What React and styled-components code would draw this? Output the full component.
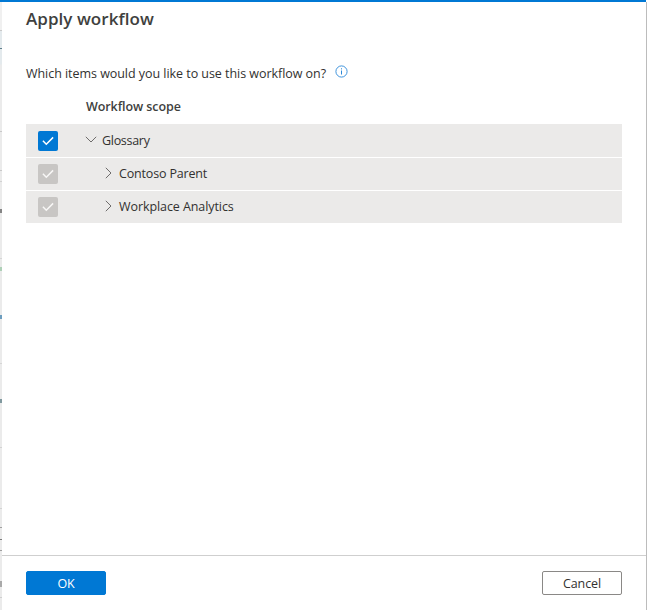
import React from 'react';
import styled, { createGlobalStyle } from 'styled-components';

const GlobalStyle = createGlobalStyle`
  *, *::before, *::after { box-sizing: border-box; }
  body {
    margin: 0;
    background: #fff;
    font-family: "Open Sans", "Noto Sans", sans-serif;
    font-size: 12.5px;
    color: #323130;
  }
`;

const Screen = styled.div`
  display: flex;
  width: 648px;
  height: 610px;
  overflow: hidden;
  background: linear-gradient(#0078d4, #0078d4) 0 0 / 646px 2px no-repeat, #fff;
`;

const PageEdge = styled.div`
  flex: none;
  display: flex;
  flex-direction: column;
  width: 2px;
  margin-top: 2px;
  background: linear-gradient(#f0f0f0 28px, #e4eaed 29px, #e4eaed 62px, #ebebeb 63px);
`;

const EdgeMark = styled.i`
  flex: none;
  height: ${(p) => p.$size}px;
  margin-top: ${(p) => p.$gap}px;
  background: ${(p) => p.$color};
`;

const Panel = styled.section`
  flex: none;
  display: flex;
  flex-direction: column;
  width: 645px;
  margin-top: 2px;
  background: #fff;
  border-right: 1px solid #bcbcbc;
`;

const Content = styled.main`
  flex: 1;
  padding: 0 24px;
`;

const Title = styled.h1`
  margin: 4px 0 0;
  font-size: 17px;
  line-height: 26px;
  font-weight: 600;
  letter-spacing: 0.05px;
  color: #403f3e;
  white-space: nowrap;
`;

const Question = styled.div`
  display: flex;
  height: 20px;
  margin-top: 32px;
  line-height: 20px;
  letter-spacing: -0.045px;
  white-space: nowrap;
  svg { margin: 1px 0 0 9px; }
`;

const ScopeHeading = styled.h2`
  margin: 13px 0 7px 60px;
  font-size: 12.5px;
  line-height: 20px;
  font-weight: 600;
  letter-spacing: -0.08px;
  color: #403f3e;
`;

const ScopeTree = styled.div`
  display: flex;
  flex-direction: column;
  gap: 1px;
  width: 596px;
`;

const ScopeRow = styled.div`
  display: flex;
  align-items: center;
  height: ${(p) => (p.$root ? 33 : 32)}px;
  padding-left: 12px;
  background: #ebeae9;
`;

const Checkbox = styled.span`
  display: grid;
  place-items: center;
  width: 20px;
  height: 20px;
  margin-right: ${(p) => (p.$indent ? 46 : 27)}px;
  border-radius: 2px;
  background: ${(p) => (p.$disabled ? '#c8c6c4' : '#0078d4')};
  color: ${(p) => (p.$disabled ? '#f8f7f6' : '#fff')};
`;

const Expander = styled.span`
  display: flex;
  justify-content: center;
  width: ${(p) => (p.$open ? 12 : 9)}px;
  margin-right: ${(p) => (p.$open ? 5 : 6)}px;
  margin-top: -2px;
`;

const RowLabel = styled.span`
  line-height: 20px;
  margin-top: ${(p) => (p.$root ? 1 : -1)}px;
  letter-spacing: ${(p) => p.$tracking}px;
`;

const Footer = styled.footer`
  display: flex;
  justify-content: space-between;
  height: 55px;
  padding: 15px 24px 0;
  border-top: 1px solid #cfcfcf;
`;

const Button = styled.button`
  width: 80px;
  height: 24px;
  padding: 1px 0 0;
  border: 1px solid ${(p) => (p.$primary ? '#0078d4' : '#8a8886')};
  border-radius: 2px;
  background: ${(p) => (p.$primary ? '#0078d4' : '#fff')};
  color: ${(p) => (p.$primary ? '#fff' : '#323130')};
  font: inherit;
  line-height: 22px;
  letter-spacing: -0.1px;
`;

const EDGE_MARKS = [
  [28, 1, '#c9c9c9'],
  [17, 1, '#5f7f8c'],
  [82, 1, '#c9c9c9'],
  [38, 1, '#c9c9c9'],
  [10, 1, '#d2d2d2'],
  [27, 4, '#858585'],
  [45, 1, '#d6d6d6'],
  [8, 4, '#aed0b7'],
  [44, 4, '#6d9dbe'],
  [44, 1, '#d6d6d6'],
  [35, 4, '#80999f'],
  [44, 1, '#d3d3d3'],
  [60, 1, '#d3d3d3'],
  [18, 1, '#a0a0a0'],
  [11, 1, '#7c7c7c'],
  [10, 1, '#a0a0a0'],
  [30, 6, '#a9a9a9'],
  [10, 1, '#cfcfcf'],
];

const ROWS = [
  { label: 'Glossary', open: true, tracking: -0.3 },
  { label: 'Contoso Parent', open: false, tracking: -0.17 },
  { label: 'Workplace Analytics', open: false, tracking: -0.08 },
];

const InfoIcon = () => (
  <svg width="13" height="13" viewBox="0 0 13 13" fill="none" stroke="#2b88d8">
    <circle cx="6.5" cy="6.5" r="5.6" strokeWidth="0.9" />
    <path d="M6.5 5.5V9.5M6.5 3.3V4.4" strokeWidth="1" />
  </svg>
);

const CheckIcon = () => (
  <svg width="12" height="10" viewBox="0 0 12 10" fill="none" stroke="currentColor" strokeWidth="1.5">
    <path d="M0.9 4.8L4.3 8.2L11.1 1.4" />
  </svg>
);

const Chevron = ({ open }) =>
  open ? (
    <svg width="12" height="7" viewBox="0 0 12 7" fill="none" stroke="#605e5c" strokeWidth="0.9">
      <path d="M0.8 0.8L6 6L11.2 0.8" />
    </svg>
  ) : (
    <svg width="7" height="12" viewBox="0 0 7 12" fill="none" stroke="#605e5c" strokeWidth="0.9">
      <path d="M0.8 0.8L6 6L0.8 11.2" />
    </svg>
  );

export default function App() {
  return (
    <>
      <GlobalStyle />
      <Screen>
        <PageEdge>
          {EDGE_MARKS.map(([gap, size, color], i) => (
            <EdgeMark key={i} $gap={gap} $size={size} $color={color} />
          ))}
        </PageEdge>
        <Panel>
          <Content>
            <Title>Apply workflow</Title>
            <Question>
              <span>Which items would you like to use this workflow on?</span>
              <InfoIcon />
            </Question>
            <ScopeHeading>Workflow scope</ScopeHeading>
            <ScopeTree>
              {ROWS.map((row) => (
                <ScopeRow key={row.label} $root={row.open}>
                  <Checkbox $disabled={!row.open} $indent={!row.open}>
                    <CheckIcon />
                  </Checkbox>
                  <Expander $open={row.open}>
                    <Chevron open={row.open} />
                  </Expander>
                  <RowLabel $root={row.open} $tracking={row.tracking}>{row.label}</RowLabel>
                </ScopeRow>
              ))}
            </ScopeTree>
          </Content>
          <Footer>
            <Button $primary>OK</Button>
            <Button>Cancel</Button>
          </Footer>
        </Panel>
      </Screen>
    </>
  );
}
